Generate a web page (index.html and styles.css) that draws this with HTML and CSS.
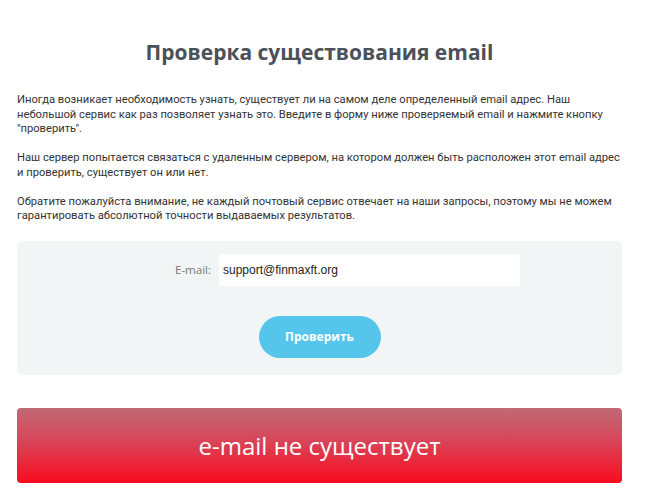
FILE: index.html
```html
<!DOCTYPE html>
<html lang="ru">
<head>
<meta charset="utf-8">
<link rel="stylesheet" href="styles.css">
</head>
<body>
<div class="page">
  <h1 class="title">Проверка существования email</h1>
  <p class="text">Иногда возникает необходимость узнать, существует ли на самом деле определенный email адрес. Наш небольшой сервис как раз позволяет узнать это. Введите в форму ниже проверяемый email и нажмите кнопку "проверить".</p>
  <p class="text">Наш сервер попытается связаться с удаленным сервером, на котором должен быть расположен этот email адрес и проверить, существует он или нет.</p>
  <p class="text">Обратите пожалуйста внимание, не каждый почтовый сервис отвечает на наши запросы, поэтому мы не можем гарантировать абсолютной точности выдаваемых результатов.</p>
  <div class="form">
    <div class="row">
      <label class="label">E-mail:</label>
      <div class="input">support@finmaxft.org</div>
    </div>
    <div class="btn">Проверить</div>
  </div>
  <div class="result">e-mail не существует</div>
</div>
</body>
</html>
```
FILE: styles.css
```css
html, body { margin: 0; padding: 0; background: #fff; }
.page {
  width: 605px;
  margin-left: 17px;
  padding-top: 38px;
  font-family: "Open Sans", sans-serif;
}
.title {
  margin: 0 0 27px;
  text-align: center;
  font-size: 21px;
  font-weight: 700;
  color: #4b5159;
  line-height: 28px;
}
.text {
  margin: 0 0 14.5px;
  font-family: Roboto, sans-serif;
  font-size: 11.2px;
  line-height: 14.5px;
  color: #333;
}
.form {
  margin-top: 17px;
  background: #f2f5f6;
  border-radius: 5px;
  height: 134px;
  display: flex;
  flex-direction: column;
  align-items: center;
  padding-top: 13px;
  box-sizing: border-box;
}
.row {
  display: flex;
  align-items: center;
  margin-left: 56px;
}
.label {
  font-size: 11.5px;
  color: #777;
  margin-right: 8px;
}
.input {
  width: 301px;
  height: 32px;
  box-sizing: border-box;
  background: #fff;
  padding-left: 4px;
  display: flex;
  align-items: center;
  font-family: "Liberation Sans", Arial, sans-serif;
  font-size: 12px;
  color: #222;
}
.btn {
  margin-top: 30px;
  width: 122px;
  height: 42px;
  border-radius: 21px;
  background: #55c5ec;
  color: #fff;
  font-weight: 700;
  font-size: 12px;
  display: flex;
  align-items: center;
  justify-content: center;
}
.result {
  margin-top: 33px;
  height: 75px;
  border-radius: 4px;
  background: linear-gradient(to bottom, #c06a76, #d84458 45%, #fa0a20);
  color: #fff;
  font-size: 24px;
  display: flex;
  align-items: center;
  justify-content: center;
}
```
